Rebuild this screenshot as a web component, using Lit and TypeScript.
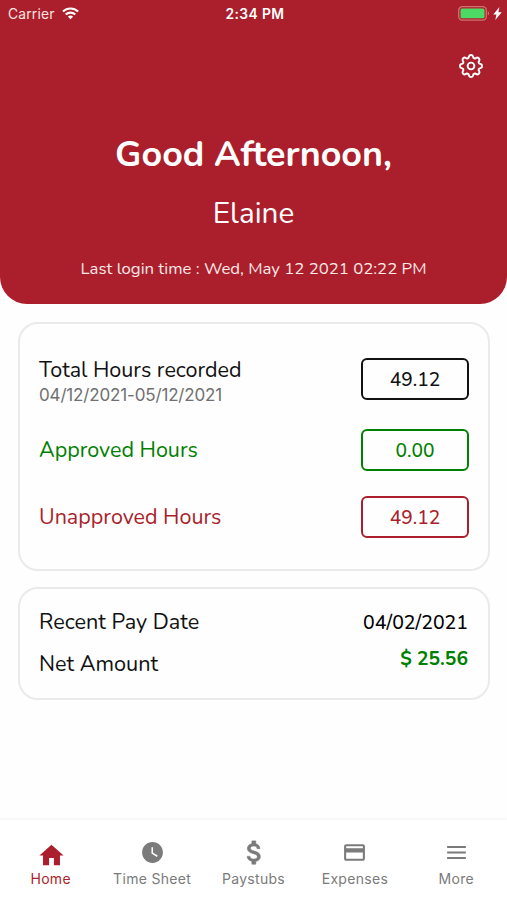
import { LitElement, html, css } from "lit";
import { customElement } from "lit/decorators.js";

interface Tab {
  id: string;
  label: string;
  size: number;
  d: string;
}

const tabs: Tab[] = [
  { id: "home", label: "Home", size: 29, d: "M10 20v-6h4v6h5v-8h3L12 3 2 12h3v8z" },
  { id: "time", label: "Time Sheet", size: 25, d: "M12 2C6.5 2 2 6.5 2 12s4.5 10 10 10 10-4.5 10-10S17.5 2 12 2zm4.2 14.2L11 13V7h1.5v5.2l4.5 2.7-.8 1.3z" },
  { id: "paystubs", label: "Paystubs", size: 31, d: "M11.8 10.9c-2.27-.59-3-1.2-3-2.15 0-1.09 1.01-1.85 2.7-1.85 1.78 0 2.44.85 2.5 2.1h2.21c-.07-1.72-1.12-3.3-3.21-3.81V3h-3v2.16c-1.94.42-3.5 1.68-3.5 3.61 0 2.31 1.91 3.46 4.7 4.13 2.5.6 3 1.48 3 2.41 0 .69-.49 1.79-2.7 1.79-2.06 0-2.87-.92-2.98-2.1h-2.2c.12 2.19 1.76 3.42 3.68 3.83V21h3v-2.15c1.95-.37 3.5-1.5 3.5-3.55 0-2.84-2.43-3.81-4.7-4.4z" },
  { id: "expenses", label: "Expenses", size: 25, d: "M20 4H4c-1.11 0-1.99.89-1.99 2L2 18c0 1.11.89 2 2 2h16c1.11 0 2-.89 2-2V6c0-1.11-.89-2-2-2zm0 14H4v-6h16v6zm0-10H4V6h16v2z" },
  { id: "more", label: "More", size: 25, d: "M3 18.2h18v-1.9H3zM3 12.95h18v-1.9H3zM3 5.8v1.9h18V5.8z" },
];

/** Outline of an eight-lobed cog, centred in a 24-unit box. */
function cogPath(): string {
  const at = (deg: number) => {
    const a = (deg * Math.PI) / 180;
    return `${(12 + 9 * Math.cos(a)).toFixed(2)} ${(12 + 9 * Math.sin(a)).toFixed(2)}`;
  };
  let d = `M${at(-12.5)}`;
  for (let k = 0; k < 8; k++) {
    d += `A2.05 2.05 0 0 1 ${at(k * 45 + 12.5)}A1.65 1.65 0 0 0 ${at(k * 45 + 32.5)}`;
  }
  return d + "z";
}

@customElement("app-root")
export class AppRoot extends LitElement {
  static styles = css`
    :host {
      display: flex;
      flex-direction: column;
      height: 900px;
      overflow: hidden;
      background: #fefefe;
      color: #111;
      font-family: Nunito, Lato, sans-serif;
      white-space: nowrap;
    }
    * { box-sizing: border-box; }
    svg { display: block; flex: none; }
    header {
      height: 304px;
      flex: none;
      display: flex;
      flex-direction: column;
      align-items: center;
      background: #aa1f2b;
      color: #fff;
      border-radius: 0 0 27px 27px;
    }
    .status {
      align-self: stretch;
      display: grid;
      grid-template-columns: 1fr auto 1fr;
      align-items: center;
      height: 27px;
      padding: 0 5px 0 8px;
      font: 400 13.8px Inter, sans-serif;
      letter-spacing: 0.2px;
      color: #fbe3e2;
    }
    .carrier { display: flex; align-items: center; gap: 7px; }
    .clock { font-weight: 600; letter-spacing: 0.4px; color: #fff; }
    .power { display: flex; align-items: center; justify-content: flex-end; gap: 3px; }
    .gear { align-self: flex-end; margin: 25.5px 23px 0 0; }
    .title { margin-top: 51.5px; font-size: 35.9px; line-height: 50px; font-weight: 700; }
    .name { margin-top: 13px; font-size: 29.7px; line-height: 40px; font-weight: 450; }
    .login { margin-top: 25px; font-size: 16.75px; line-height: 22px; color: #fde9e8; }
    .card {
      flex: none;
      margin: 0 17px 0 18px;
      border: 2px solid #e9ebeb;
      border-radius: 20px;
      padding: 0 19px;
      font-size: 21.5px;
      line-height: 26px;
    }
    .hours { height: 249px; margin-top: 18px; padding-top: 34px; }
    .pay { height: 113px; margin-top: 16px; display: flex; justify-content: space-between; }
    .row { display: flex; justify-content: space-between; align-items: center; height: 42px; }
    .row.approved { margin-top: 29px; color: #008000; }
    .row.unapproved { margin-top: 25px; color: #aa1f2b; }
    .period { padding-top: 4px; }
    .range { font: 400 17px/22px Inter, sans-serif; letter-spacing: -0.16px; color: #707070; margin-top: 1px; }
    .box {
      width: 108px;
      height: 42px;
      border: 2px solid currentColor;
      border-radius: 6px;
      text-align: center;
      font-size: 19.2px;
      font-weight: 500;
      line-height: 40px;
    }
    .labels { padding-top: 12px; font-size: 21.65px; line-height: 42px; }
    .values { padding: 21px 1px 0 0; text-align: right; font-size: 19.5px; }
    .date { line-height: 26px; font-weight: 500; color: #000; }
    .amount { margin-top: 10px; font-size: 19.3px; font-weight: 700; color: #008000; }
    nav {
      margin-top: auto;
      height: 80px;
      flex: none;
      display: grid;
      grid-template-columns: repeat(5, 1fr);
      background: #fff;
      box-shadow: 0 -1px 2px 1px #f7f7f7;
      color: #7b7b7b;
      font: 400 14px/20px Inter, sans-serif;
      letter-spacing: 0.3px;
      padding-top: 17px;
    }
    .tab { display: flex; flex-direction: column; align-items: center; }
    .glyph { height: 31px; display: flex; align-items: center; }
    .tab.home { color: #aa1f2b; }
    .tab span { margin-top: 1px; }
    .tab.home .glyph { padding: 5px 0 0 1px; }
    .tab.paystubs .glyph { padding-left: 2px; }
    .tab.paystubs path { stroke: currentColor; stroke-width: 0.5; }
  `;

  private statusBar() {
    return html`<div class="status">
      <div class="carrier">
        <span>Carrier</span>
        <svg width="17" height="13" viewBox="0 0 17 13" fill="none" stroke="#fff" stroke-width="2.1">
          <path d="M.9 4.6a11 11 0 0 1 15.2 0"></path>
          <path d="M3.7 7.5a7 7 0 0 1 9.6 0"></path>
          <path d="M8.5 12.3 5.9 9.7a3.7 3.7 0 0 1 5.2 0z" fill="#fff" stroke="none"></path>
        </svg>
      </div>
      <span class="clock">2:34 PM</span>
      <div class="power">
        <svg width="32" height="15" viewBox="0 0 32 15">
          <rect x=".7" y=".7" width="27.6" height="13.4" rx="3.6" fill="none" stroke="#d0716f" stroke-width="1.3"></rect>
          <rect x="2.5" y="2.5" width="24" height="9.8" rx="1.6" fill="#4cd964"></rect>
          <path d="M29.8 5.2c1.6.6 1.6 3.8 0 4.4z" fill="#d0716f"></path>
        </svg>
        <svg width="9" height="13" viewBox="0 0 8 12"><path d="M5.8 0 .1 6.9H3L2 12l5.9-7.2H4.8z" fill="#fff"></path></svg>
      </div>
    </div>`;
  }

  render() {
    return html`
      <header>
        ${this.statusBar()}
        <svg class="gear" width="26" height="26" viewBox="0 0 24 24" fill="none" stroke="#fff" stroke-width="1.8" stroke-linejoin="round">
          <path d=${cogPath()}></path>
          <circle cx="12" cy="12" r="3.1"></circle>
        </svg>
        <div class="title">Good Afternoon,</div>
        <div class="name">Elaine</div>
        <div class="login">Last login time : Wed, May 12 2021 02:22 PM</div>
      </header>
      <section class="card hours">
        <div class="row">
          <div class="period">
            <div>Total Hours recorded</div>
            <div class="range">04/12/2021-05/12/2021</div>
          </div>
          <div class="box">49.12</div>
        </div>
        <div class="row approved"><span>Approved Hours</span><div class="box">0.00</div></div>
        <div class="row unapproved"><span>Unapproved Hours</span><div class="box">49.12</div></div>
      </section>
      <section class="card pay">
        <div class="labels">
          <div>Recent Pay Date</div>
          <div>Net Amount</div>
        </div>
        <div class="values">
          <div class="date">04/02/2021</div>
          <div class="amount">$ 25.56</div>
        </div>
      </section>
      <nav>
        ${tabs.map(
          (t) => html`<div class="tab ${t.id}">
            <div class="glyph"><svg width=${t.size} height=${t.size} viewBox="0 0 24 24" fill="currentColor"><path d=${t.d}></path></svg></div>
            <span>${t.label}</span>
          </div>`,
        )}
      </nav>
    `;
  }
}
